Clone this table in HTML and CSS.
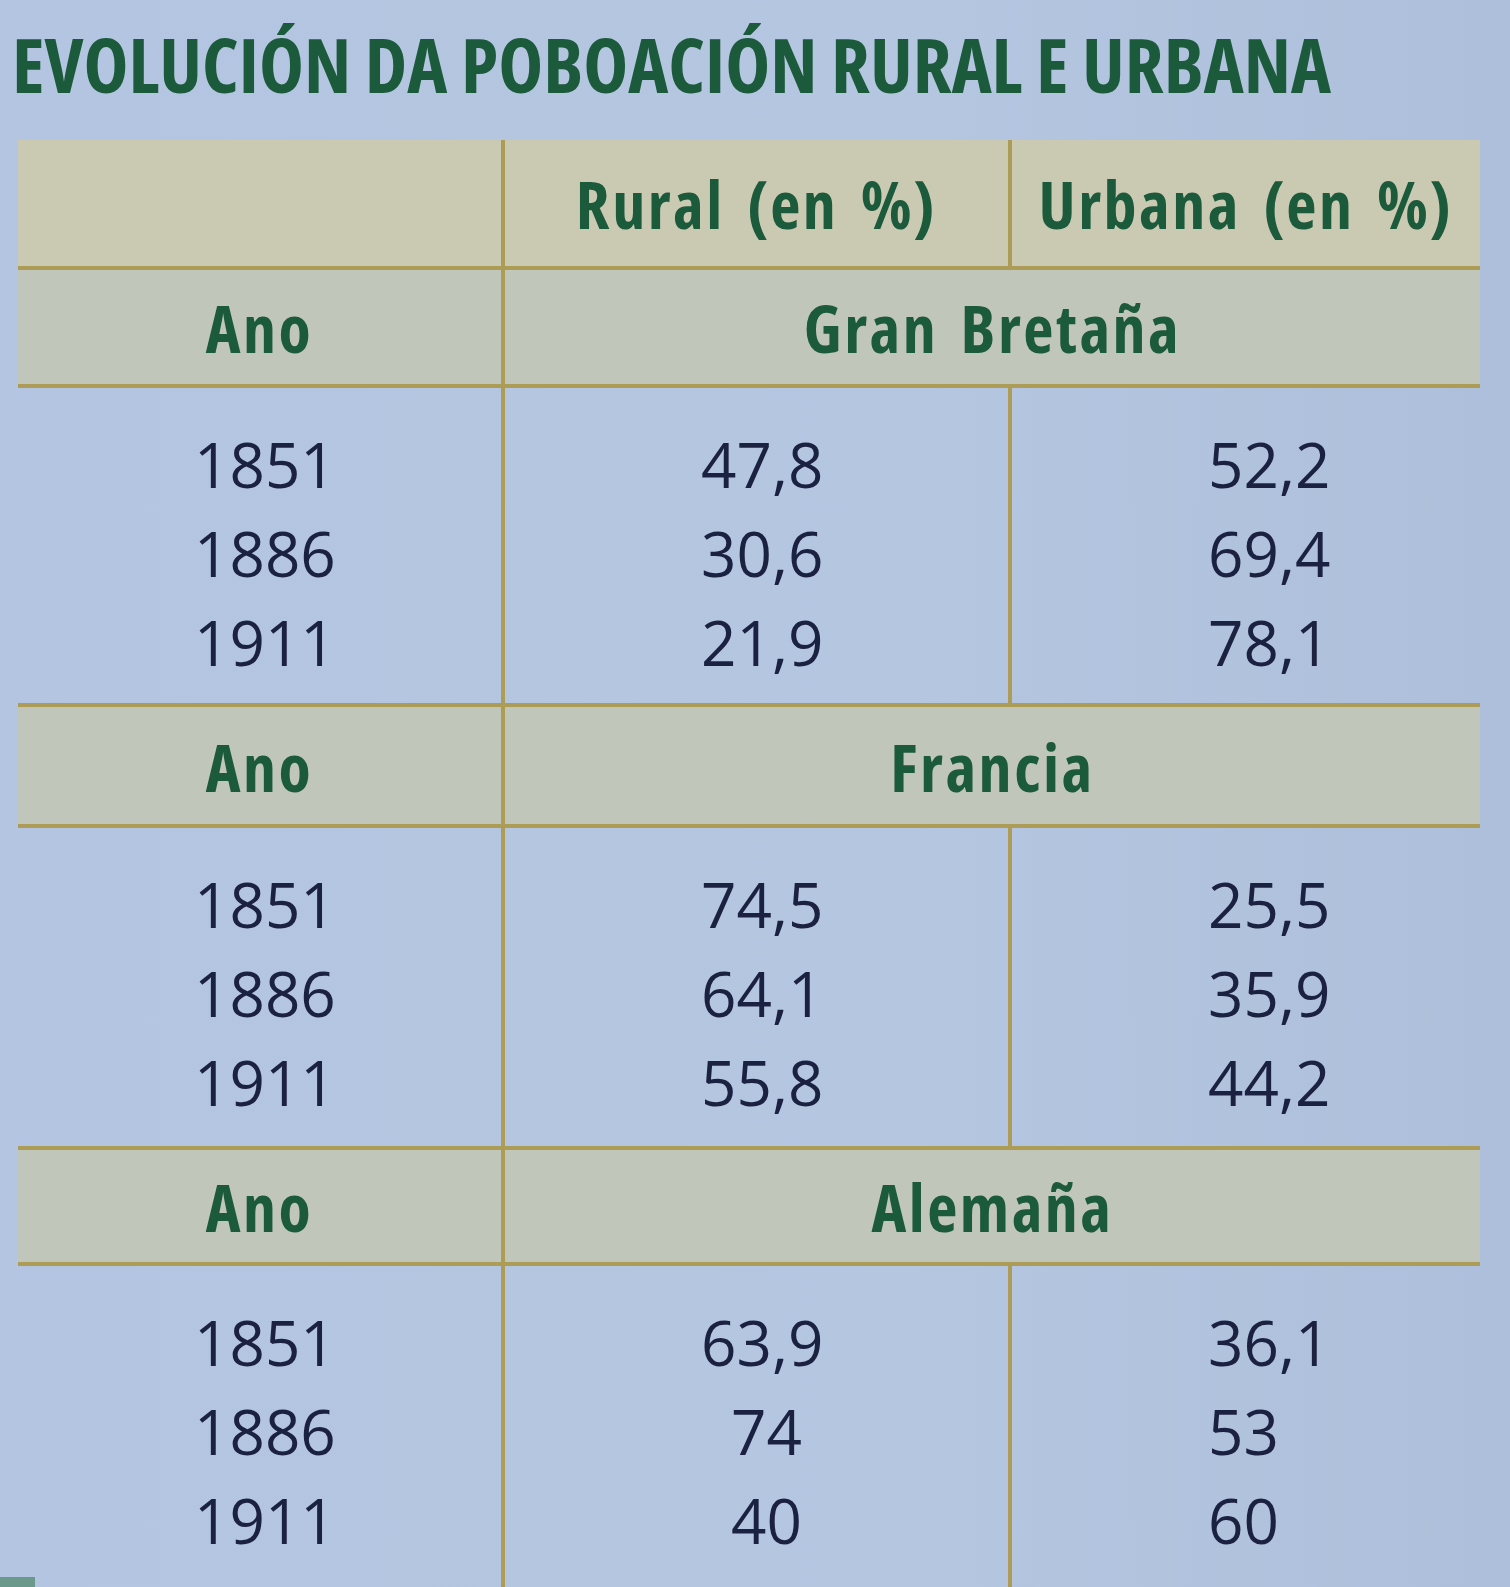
FILE: index.html
```html
<!DOCTYPE html>
<html lang="gl">
<head>
<meta charset="utf-8">
<title>Evolución da poboación rural e urbana</title>
<link rel="stylesheet" href="styles.css">
</head>
<body>
<div class="page">
  <h1 class="title">EVOLUCIÓN DA POBOACIÓN RURAL E URBANA</h1>
  <table class="pop">
    <colgroup>
      <col class="c1"><col class="c2"><col class="c3">
    </colgroup>
    <thead>
      <tr class="head-top">
        <th class="blank"></th>
        <th>Rural (en %)</th>
        <th>Urbana (en %)</th>
      </tr>
    </thead>
    <tbody>
      <tr class="country gb">
        <th>Ano</th>
        <th colspan="2">Gran Bretaña</th>
      </tr>
      <tr class="values">
        <td class="year"><span>1851</span><span>1886</span><span>1911</span></td>
        <td class="num"><span>47,8</span><span>30,6</span><span>21,9</span></td>
        <td class="num"><span>52,2</span><span>69,4</span><span>78,1</span></td>
      </tr>
      <tr class="country fr">
        <th>Ano</th>
        <th colspan="2">Francia</th>
      </tr>
      <tr class="values mid">
        <td class="year"><span>1851</span><span>1886</span><span>1911</span></td>
        <td class="num"><span>74,5</span><span>64,1</span><span>55,8</span></td>
        <td class="num"><span>25,5</span><span>35,9</span><span>44,2</span></td>
      </tr>
      <tr class="country de">
        <th>Ano</th>
        <th colspan="2">Alemaña</th>
      </tr>
      <tr class="values last">
        <td class="year"><span>1851</span><span>1886</span><span>1911</span></td>
        <td class="num"><span>63,9</span><span class="int">74</span><span class="int">40</span></td>
        <td class="num"><span>36,1</span><span>53</span><span>60</span></td>
      </tr>
    </tbody>
  </table>
  <div class="corner"></div>
</div>
</body>
</html>
```
FILE: styles.css
```css
html, body {
  margin: 0;
  padding: 0;
  background: #b1c3df;
}
.page {
  position: relative;
  width: 1510px;
  height: 1587px;
  overflow: hidden;
  background: linear-gradient(90deg, #b3c5e0 0%, #b5c6e1 60%, #aebfdb 100%);
}
.title {
  margin: 0;
  padding: 26px 0 0 12px;
  height: 110px;
  box-sizing: border-box;
  font-family: "Open Sans", "DejaVu Sans", sans-serif;
  font-weight: 700;
  font-stretch: 75%;
  font-size: 76px;
  line-height: 76px;
  letter-spacing: 0;
  color: #1c5a3c;
  white-space: nowrap;
}
.pop {
  margin-left: 18px;
  margin-top: 30px;
  width: 1462px;
  border-collapse: collapse;
  table-layout: fixed;
  font-family: "Open Sans", "DejaVu Sans", sans-serif;
}
.c1 { width: 485px; }
.c2 { width: 507px; }
.c3 { width: 470px; }
.pop th {
  font-weight: 700;
  font-stretch: 83%;
  color: #1c5a3c;
  font-size: 66px;
  letter-spacing: 2.5px;
  word-spacing: 8px;
  padding: 0;
  text-align: center;
}
.head-top th {
  background: #cac9b1;
  height: 126px;
  border-bottom: 4px solid #ad9c55;
}
.head-top th + th {
  border-left: 4px solid #ad9c55;
}
.country th {
  background: #c1c6bb;
  border-bottom: 4px solid #ad9c55;
}
.country.gb th { height: 114px; }
.country.fr th { height: 117px; }
.country.de th { height: 112px; }
.country th + th {
  border-left: 4px solid #ad9c55;
}
.values td {
  vertical-align: top;
  padding: 32px 0 16px;
  border-bottom: 4px solid #ad9c55;
  font-size: 62px;
  line-height: 89px;
  color: #1b2140;
  text-align: left;
}
.values.mid td {
  padding-bottom: 19px;
}
.values td + td {
  border-left: 4px solid #ad9c55;
}
.values.last td {
  border-bottom: none;
  padding-bottom: 60px;
}
.values td span {
  display: block;
}
.year { padding-left: 176px !important; }
.num { padding-left: 196px !important; }
.num .int { padding-left: 30px; }
.corner {
  position: absolute;
  left: 0;
  bottom: 0;
  width: 35px;
  height: 10px;
  background: #6b9a8c;
}
```
